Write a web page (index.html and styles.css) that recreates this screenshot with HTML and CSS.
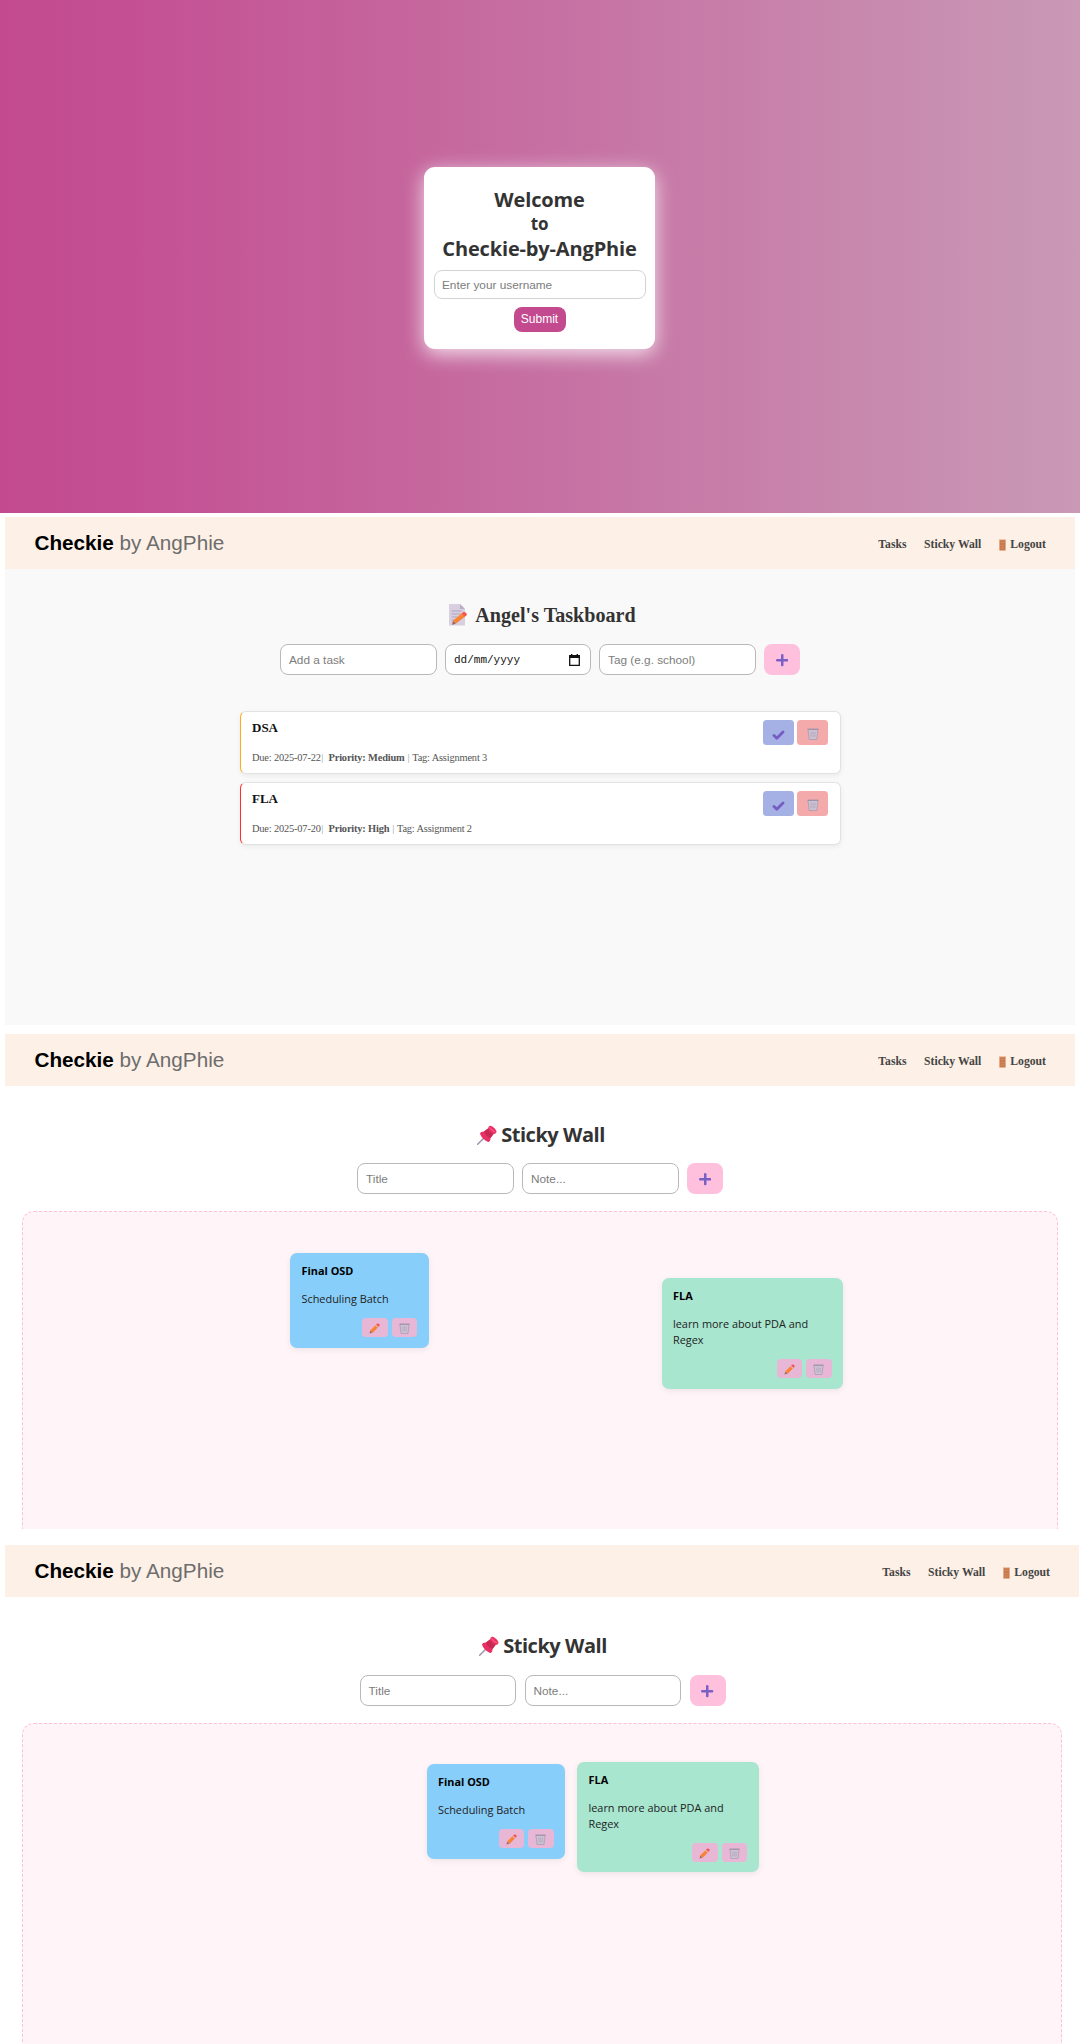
FILE: index.html
```html
<!DOCTYPE html>
<html lang="en">
<head>
<meta charset="utf-8">
<title>Checkie by AngPhie</title>
<link rel="stylesheet" href="styles.css">
</head>
<body>
<svg class="defs" aria-hidden="true">
  <defs>
    <linearGradient id="purple" x1="0" y1="0" x2="1" y2="1"><stop offset="0" stop-color="#5c6bb0"/><stop offset="1" stop-color="#8b50d2"/></linearGradient>
    <linearGradient id="orange" x1="0" y1="0" x2="1" y2="1"><stop offset="0" stop-color="#ff9a3c"/><stop offset="1" stop-color="#f46d2c"/></linearGradient>
    <symbol id="plus" viewBox="0 0 12 12"><path d="M6 1.2v9.600M1.200 6h9.600" stroke="#7a5fc4" stroke-width="2.400" stroke-linecap="round"/></symbol>
    <symbol id="check" viewBox="0 0 12 10"><path d="M1.500 5.500 4.300 8.200 10.500 2" fill="none" stroke="url(#purple)" stroke-width="2.800" stroke-linecap="round" stroke-linejoin="round"/></symbol>
    <symbol id="trash" viewBox="0 0 12 12"><path d="M1 1.500h10L9.800 11.500H2.200z" fill="#cdc2d4" stroke="#a69bb0" stroke-width=".8"/><path d="M.5 1.300h11" stroke="#9c93a8" stroke-width="1.300"/><path d="M4 3.500l.4 6M6 3.500v6M8 3.500l-.4 6M3 5.200h6M3 7.800h6" stroke="#b6a9be" stroke-width=".6"/></symbol>
    <symbol id="pencil" viewBox="0 0 12 12"><path d="M.5 11.500 1.400 8 4 10.600z" fill="#a06e6b"/><path d="M1.400 8 7 2.400 9.600 5 4 10.600z" fill="url(#orange)"/><path d="M7 2.400 7.800 1.600 10.400 4.200 9.600 5z" fill="#d5b5b8"/><path d="M7.800 1.600 8.600.8Q9.800 0 11 1T11.200 3.400L10.400 4.200z" fill="#f5504b"/></symbol>
    <symbol id="door" viewBox="0 0 8 13"><path d="M0 0h8v13H0z" fill="#e8b38e"/><path d="M1 1h6v11.500H1z" fill="#c9794f"/><path d="M2 3.700h4M2 7h4M2 10h4" stroke="#d99567" stroke-width=".8"/></symbol>
    <symbol id="memo" viewBox="0 0 18 22"><path d="M0 0h11l5 5v16.500H0z" fill="#d8cfe0"/><path d="M11 0v5h5z" fill="#b8adc4"/><path d="M2.500 7h10M2.500 10h9M2.500 13h6M2.500 16h3" stroke="#afa4bc" stroke-width="1"/><path d="M3 21l1-4.500 3 3z" fill="#a3675b"/><path d="M4 16.500 12.500 9.500 15.500 13 7 19.500z" fill="url(#orange)"/><path d="M12.500 9.500 14.500 8Q16.500 7.500 17.500 9.500T17 11.700L15.500 13z" fill="#f7564b"/></symbol>
    <symbol id="pin" viewBox="0 0 20 20"><path d="M.7 19.300 8 12" stroke="#9e93aa" stroke-width="1.500" stroke-linecap="round"/><path d="M3 8.500Q3.500 6.500 7 6.500L11 3.500Q11.500.5 13.300.7C16 1.300 19 4 19.500 6.500Q19.500 8.500 16.500 9L13.500 13Q13.500 16.500 11.500 17C8 16 4 12 3 8.500Z" fill="#e92f63"/><path d="M11 3.500Q12 7 16.500 9L13.500 13Q9 11.500 7 6.500Z" fill="#c82954"/><path d="M12.500 2.300Q15 6 18.500 7" fill="none" stroke="#ff5887" stroke-width="1.300"/></symbol>
  </defs>
</svg>

<section class="welcome">
  <form class="login">
    <h1 class="login-title">Welcome<span class="small">to</span><span class="brand-name">Checkie-by-AngPhie</span></h1>
    <div class="field login-field">Enter your username</div>
    <div class="submit">Submit</div>
  </form>
</section>

<section class="screen tasks">
  <header class="bar">
    <div class="logo"><b>Checkie</b> by AngPhie</div>
    <nav class="nav"><a>Tasks</a><a>Sticky Wall</a><a class="logout"><svg class="door"><use href="#door"/></svg>Logout</a></nav>
  </header>
  <main class="task-main">
    <h2 class="task-heading"><svg class="memo"><use href="#memo"/></svg>Angel's Taskboard</h2>
    <div class="form task-form">
      <div class="field">Add a task</div>
      <div class="field date">dd/mm/yyyy<svg class="calendar" viewBox="0 0 11 12"><path d="M.7 1.700h9.600v9.600H.7z" fill="none" stroke="#111" stroke-width="1.300"/><path d="M.5 1.500h10v2.600H.5zM2 0h1.400v2H2zM7.600 0H9v2H7.600z" fill="#111"/></svg></div>
      <div class="field tag">Tag (e.g. school)</div>
      <div class="add"><svg><use href="#plus"/></svg></div>
    </div>
    <div class="list">
      <article class="task medium">
        <div><h3>DSA</h3><p>Due: 2025-07-22<i>|</i>&nbsp; <b>Priority: Medium</b> <i>|</i> Tag: Assignment 3</p></div>
        <div class="actions"><span class="done"><svg><use href="#check"/></svg></span><span class="remove"><svg><use href="#trash"/></svg></span></div>
      </article>
      <article class="task high">
        <div><h3>FLA</h3><p>Due: 2025-07-20<i>|</i>&nbsp; <b>Priority: High</b> <i>|</i> Tag: Assignment 2</p></div>
        <div class="actions"><span class="done"><svg><use href="#check"/></svg></span><span class="remove"><svg><use href="#trash"/></svg></span></div>
      </article>
    </div>
  </main>
</section>

<section class="screen wall first">
  <header class="bar">
    <div class="logo"><b>Checkie</b> by AngPhie</div>
    <nav class="nav"><a>Tasks</a><a>Sticky Wall</a><a class="logout"><svg class="door"><use href="#door"/></svg>Logout</a></nav>
  </header>
  <h2 class="wall-heading"><svg><use href="#pin"/></svg>Sticky Wall</h2>
  <div class="form">
    <div class="field">Title</div><div class="field">Note...</div>
    <div class="add"><svg><use href="#plus"/></svg></div>
  </div>
  <div class="board">
    <article class="note blue"><h3>Final OSD</h3><p>Scheduling Batch</p><div class="tools"><span><svg><use href="#pencil"/></svg></span><span><svg><use href="#trash"/></svg></span></div></article>
    <article class="note green"><h3>FLA</h3><p>learn more about PDA and<br>Regex</p><div class="tools"><span><svg><use href="#pencil"/></svg></span><span><svg><use href="#trash"/></svg></span></div></article>
  </div>
</section>

<section class="screen wall second">
  <header class="bar">
    <div class="logo"><b>Checkie</b> by AngPhie</div>
    <nav class="nav"><a>Tasks</a><a>Sticky Wall</a><a class="logout"><svg class="door"><use href="#door"/></svg>Logout</a></nav>
  </header>
  <h2 class="wall-heading"><svg><use href="#pin"/></svg>Sticky Wall</h2>
  <div class="form">
    <div class="field">Title</div><div class="field">Note...</div>
    <div class="add"><svg><use href="#plus"/></svg></div>
  </div>
  <div class="board">
    <article class="note blue"><h3>Final OSD</h3><p>Scheduling Batch</p><div class="tools"><span><svg><use href="#pencil"/></svg></span><span><svg><use href="#trash"/></svg></span></div></article>
    <article class="note green"><h3>FLA</h3><p>learn more about PDA and<br>Regex</p><div class="tools"><span><svg><use href="#pencil"/></svg></span><span><svg><use href="#trash"/></svg></span></div></article>
  </div>
</section>
</body>
</html>
```
FILE: styles.css
```css
* { box-sizing: border-box; }
body { margin: 0; width: 1080px; height: 2044px; overflow: hidden; background: #fff; font-family: "Liberation Sans", Arial, sans-serif; }
h1, h2, h3, p { margin: 0; }
svg { display: block; flex: none; }
.defs { position: absolute; width: 0; height: 0; }

.welcome { height: 513px; padding-top: 167px; background: linear-gradient(90deg, #c34a8f 0%, #c45093 12%, #c999b6 100%); }
.login { width: 231px; height: 182px; margin: 0 auto; padding: 20px 10px 0; border-radius: 11px; background: #fff; box-shadow: 0 5px 20px rgba(255, 255, 255, .8); display: flex; flex-direction: column; align-items: center; position: relative; left: -.5px; }
.login-title { display: flex; flex-direction: column; align-items: center; color: #333; font: 700 20px/25px "Open Sans", "Noto Sans", sans-serif; letter-spacing: -.15px; white-space: nowrap; }
.login-title .small { font-size: 17px; line-height: 24px; }
.login-field.field { width: 212px; height: 29px; margin-top: 9px; padding-left: 7.500px; border-color: #d3d3d3; border-radius: 8px; }
.submit { margin-top: 8px; width: 52px; height: 25px; border-radius: 8px; background: #c34a8f; color: #fff; font-size: 12px; line-height: 25px; text-align: center; }

.field { width: 156.500px; height: 31px; flex: none; padding-left: 8px; display: flex; align-items: center; border: 1px solid #b9b9b9; border-radius: 8px; background: #fff; color: #7c7c7c; font-size: 11.500px; white-space: nowrap; }
.screen { margin-left: 5px; width: 1070px; overflow: hidden; }
.bar { height: 52px; padding: 0 29px 0 29.500px; display: flex; align-items: center; justify-content: space-between; background: #fdf0e6; }
.logo { font-size: 20.700px; line-height: 24px; color: #6d6d6d; margin-top: -1px; }
.logo b { color: #000; }
.nav { display: flex; gap: 17.500px; padding-top: 4px; color: #444; font: 700 11.700px/16px "Liberation Serif", "Times New Roman", serif; }
.logout { display: flex; align-items: center; gap: 4.500px; }
.door { width: 7px; height: 12px; }
.form { display: flex; gap: 8.500px; justify-content: center; }
.add { width: 36px; height: 31px; border-radius: 8px; background: #ffc0dd; display: flex; align-items: center; justify-content: center; }
.add svg { width: 12.500px; height: 12.500px; margin-top: 2px; }
.field { font-size: 11.800px; }

.tasks { margin-top: 4px; height: 508px; background: #f9f9f9; }
.task-main { padding-top: 33px; }
.task-heading { display: flex; align-items: center; justify-content: center; gap: 8px; height: 25px; padding-left: 5px; color: #333; font: 700 20.100px/24px "Liberation Serif", "Times New Roman", serif; }
.memo { width: 18px; height: 22px; }
.task-form { margin-top: 17px; }
.date { width: 145.500px; justify-content: space-between; padding-right: 10px; color: #111; font: 11px/16px "Liberation Mono", "Courier New", monospace; }
.calendar { width: 11px; height: 12px; }
.list { width: 601px; margin: 36px auto 0; display: flex; flex-direction: column; gap: 8px; }
.task { height: 63px; padding: 8px 11.500px 0 11.500px; display: flex; justify-content: space-between; border: 1px solid #e2e2e2; border-radius: 6px; background: #fff; box-shadow: 0 2px 5px rgba(0, 0, 0, .06); font-family: "Liberation Serif", "Times New Roman", serif; }
.medium { border-left: 1.500px solid #ffab17; }
.high { border-left: 1.500px solid #ff2d2d; }
.task h3 { font-size: 13px; line-height: 15px; color: #111; }
.task p { margin-top: 16px; font-size: 10.400px; letter-spacing: -.17px; line-height: 13px; color: #555; white-space: pre; }
.task i { font-style: normal; color: #999; padding: 0 .5px; }
.actions { display: flex; gap: 3px; }
.actions span { width: 31px; height: 25px; border-radius: 3.500px; background: #a5b0e4; display: flex; align-items: center; justify-content: center; }
.actions .remove { background: #f4aaaa; }
.actions svg { width: 12px; height: 12px; margin-top: 3px; }
.actions .done svg { width: 13px; height: 10px; margin-top: 4px; }

.wall.first { margin-top: 9px; height: 495px; }
.wall.second { margin-top: 16px; width: 1074px; height: 499px; }
.wall-heading { height: 29px; margin-top: 34px; display: flex; align-items: center; justify-content: center; gap: 4px; padding-left: 2px; color: #333; font: 700 20px/28px "Open Sans", "Noto Sans", sans-serif; letter-spacing: -.45px; }
.wall-heading svg { width: 20px; height: 20px; }
.wall .form { margin-top: 14px; }
.second .form { margin-top: 15px; padding-left: 1px; }
.board { position: relative; height: 360px; margin: 17px 17.500px 0 17px; border: 1px dashed #ffbfd5; border-radius: 12px; background: #fff5f9; }
.second .board { margin-top: 16.500px; margin-right: 17px; }
.note { position: absolute; padding: 10px 11.500px 0 11.500px; border-radius: 7px; font-family: "Open Sans", "Noto Sans", sans-serif; box-shadow: 0 2px 6px rgba(0, 0, 0, .07); }
.note h3 { font-size: 10.900px; line-height: 16px; color: #000; }
.note p { margin-top: 12px; font-size: 10.900px; line-height: 16px; color: #222; white-space: nowrap; }
.blue { width: 138.500px; height: 94.500px; background: #87cefa; }
.green { width: 181.500px; height: 110.500px; background: #a8e6cf; }
.tools { margin-top: 11px; display: flex; justify-content: flex-end; gap: 4px; }
.tools span { width: 25.500px; height: 19px; border-radius: 4px; background: #e9b7d6; display: flex; align-items: center; justify-content: center; }
.tools svg { width: 11px; height: 11px; margin-top: 2px; }
.first .blue { left: 267px; top: 41px; }
.first .green { left: 638.500px; top: 66px; }
.second .blue { left: 403.500px; top: 40.500px; }
.second .green { left: 554px; top: 38px; }
```
